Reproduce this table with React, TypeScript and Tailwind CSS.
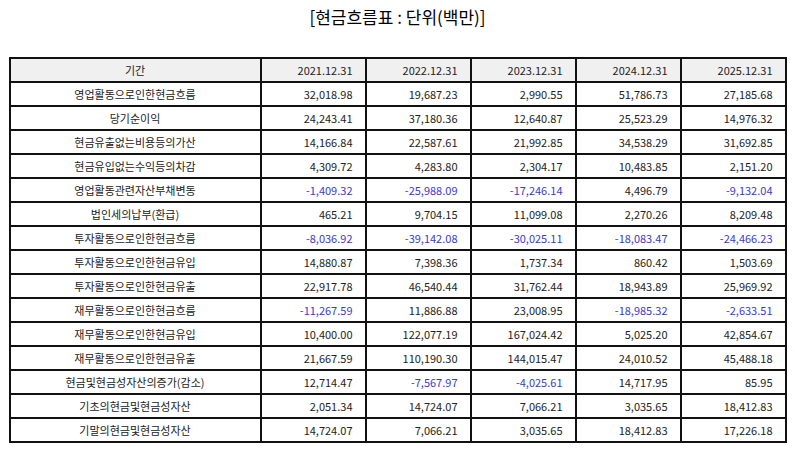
import React from 'react';

// 현금흐름표 데이터 (단위: 백만)
const years = ['2021.12.31', '2022.12.31', '2023.12.31', '2024.12.31', '2025.12.31'];

const rows: [string, string[]][] = [
  ['영업활동으로인한현금흐름', ['32,018.98', '19,687.23', '2,990.55', '51,786.73', '27,185.68']],
  ['당기순이익', ['24,243.41', '37,180.36', '12,640.87', '25,523.29', '14,976.32']],
  ['현금유출없는비용등의가산', ['14,166.84', '22,587.61', '21,992.85', '34,538.29', '31,692.85']],
  ['현금유입없는수익등의차감', ['4,309.72', '4,283.80', '2,304.17', '10,483.85', '2,151.20']],
  ['영업활동관련자산부채변동', ['-1,409.32', '-25,988.09', '-17,246.14', '4,496.79', '-9,132.04']],
  ['법인세의납부(환급)', ['465.21', '9,704.15', '11,099.08', '2,270.26', '8,209.48']],
  ['투자활동으로인한현금흐름', ['-8,036.92', '-39,142.08', '-30,025.11', '-18,083.47', '-24,466.23']],
  ['투자활동으로인한현금유입', ['14,880.87', '7,398.36', '1,737.34', '860.42', '1,503.69']],
  ['투자활동으로인한현금유출', ['22,917.78', '46,540.44', '31,762.44', '18,943.89', '25,969.92']],
  ['재무활동으로인한현금흐름', ['-11,267.59', '11,886.88', '23,008.95', '-18,985.32', '-2,633.51']],
  ['재무활동으로인한현금유입', ['10,400.00', '122,077.19', '167,024.42', '5,025.20', '42,854.67']],
  ['재무활동으로인한현금유출', ['21,667.59', '110,190.30', '144,015.47', '24,010.52', '45,488.18']],
  ['현금및현금성자산의증가(감소)', ['12,714.47', '-7,567.97', '-4,025.61', '14,717.95', '85.95']],
  ['기초의현금및현금성자산', ['2,051.34', '14,724.07', '7,066.21', '3,035.65', '18,412.83']],
  ['기말의현금및현금성자산', ['14,724.07', '7,066.21', '3,035.65', '18,412.83', '17,226.18']],
];

export default function App() {
  return (
    <div
      className="w-[795px] h-[452px] bg-white text-[#222] flex flex-col items-center"
      style={{ fontFamily: '"Noto Sans CJK KR", "Noto Sans", sans-serif' }}
    >
      {/* 제목 */}
      <h1 className="mt-[5px] h-[24px] text-[17px] leading-[24px] text-black">[현금흐름표 : 단위(백만)]</h1>

      {/* 표 */}
      <table className="mt-[28px] w-[776px] table-fixed border-collapse text-[11px]">
        <colgroup>
          <col className="w-[251px]" />
          {years.map((y) => (
            <col key={y} className="w-[105px]" />
          ))}
        </colgroup>
        <thead>
          <tr className="h-[24px] bg-[#f0f0f0]">
            <th className="border-2 border-[#111] font-normal text-center p-0">기간</th>
            {years.map((y) => (
              <th key={y} className="border-2 border-[#111] font-normal text-right pr-[12px] p-0">
                {y}
              </th>
            ))}
          </tr>
        </thead>
        <tbody>
          {rows.map(([label, vals]) => (
            <tr key={label} className="h-[24px]">
              <td className="border-2 border-[#111] text-center p-0">{label}</td>
              {vals.map((v, i) => (
                <td
                  key={i}
                  className={`border-2 border-[#111] text-right p-0 pr-[12px] ${
                    v.startsWith('-') ? 'text-[#3a3acc]' : ''
                  }`}
                >
                  {v}
                </td>
              ))}
            </tr>
          ))}
        </tbody>
      </table>
    </div>
  );
}
